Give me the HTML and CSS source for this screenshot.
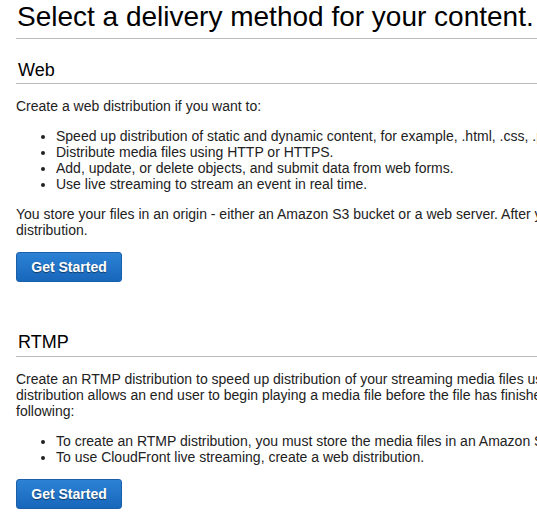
FILE: index.html
```html
<!DOCTYPE html>
<html lang="en">
<head>
<meta charset="utf-8">
<title>Select a delivery method</title>
<link rel="stylesheet" href="styles.css">
</head>
<body>
<div class="page">
  <h1 class="page-title">Select a delivery method for your content.</h1>

  <section class="method">
    <h2 class="method-title">Web</h2>
    <p>Create a web distribution if you want to:</p>
    <ul>
      <li>Speed up distribution of static and dynamic content, for example, .html, .css, .php, and graphics files.</li>
      <li>Distribute media files using HTTP or HTTPS.</li>
      <li>Add, update, or delete objects, and submit data from web forms.</li>
      <li>Use live streaming to stream an event in real time.</li>
    </ul>
    <p>You store your files in an origin - either an Amazon S3 bucket or a web server. After you create the distribution, you can add more origins to the distribution.</p>
    <button class="btn-primary" type="button">Get Started</button>
  </section>

  <section class="method">
    <h2 class="method-title">RTMP</h2>
    <p>Create an RTMP distribution to speed up distribution of your streaming media files using Adobe Flash Media Server's RTMP protocol. An RTMP distribution allows an end user to begin playing a media file before the file has finished downloading from a CloudFront edge location. Note the following:</p>
    <ul>
      <li>To create an RTMP distribution, you must store the media files in an Amazon S3 bucket.</li>
      <li>To use CloudFront live streaming, create a web distribution.</li>
    </ul>
    <button class="btn-primary" type="button">Get Started</button>
  </section>
</div>
</body>
</html>
```

FILE: styles.css
```css
html, body {
  margin: 0;
  padding: 0;
  background: #fff;
  overflow: hidden;
}

body {
  font-family: "Liberation Sans", Arial, sans-serif;
  font-size: 14px;
  line-height: 16px;
  color: #222;
}

/* the console panel is wider than the window; it is clipped on the right */
.page {
  width: 890px;
  padding: 0 0 0 16px;
}

.page-title {
  margin: 0;
  padding: 1px 0 5px 1px;
  font-size: 28px;
  line-height: 32px;
  font-weight: normal;
  color: #000;
  border-bottom: 1px solid #bbb;
}

.method {
  padding-top: 20px;
}

.method + .method {
  padding-top: 49px;
}

.method-title {
  margin: 0;
  padding: 0 0 2px 2px;
  font-size: 18px;
  line-height: 22px;
  font-weight: normal;
  color: #000;
  border-bottom: 1px solid #bbb;
}

.method + .method .method-title {
  padding-bottom: 3px;
}

.method p {
  margin: 14px 0;
}

.method ul {
  margin: 14px 0;
  padding-left: 40px;
}

.btn-primary {
  display: block;
  margin-top: 14px;
  width: 106px;
  height: 30px;
  padding: 0;
  border: 1px solid #1b5fa8;
  border-radius: 3px;
  background: linear-gradient(#2d82d6, #1767bb);
  color: #fff;
  font-family: "Liberation Sans", Arial, sans-serif;
  font-size: 14px;
  font-weight: bold;
  text-shadow: 0 1px 1px rgba(0, 0, 0, 0.5);
  cursor: pointer;
}
```
